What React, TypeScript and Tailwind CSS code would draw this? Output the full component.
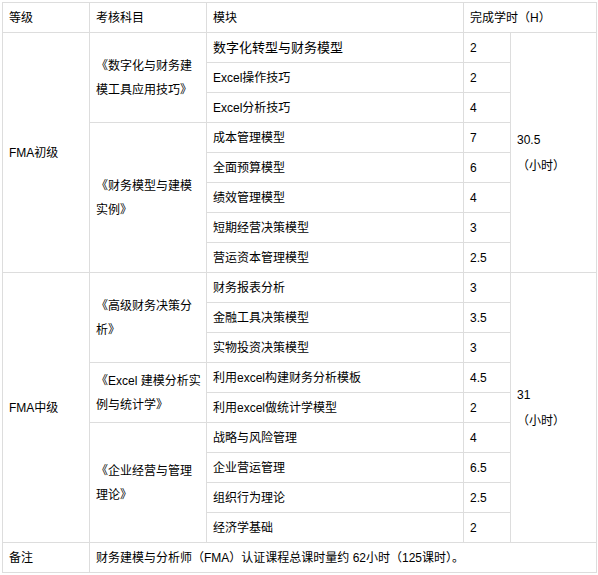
const cell = 'border border-[#dddddd] px-[6px] align-middle';

type Mod = { name: string; hours: string; big?: boolean };

const groups: {
  level: string;
  total: string;
  subjects: { lines: [string, string]; modules: Mod[] }[];
}[] = [
  {
    level: 'FMA初级',
    total: '30.5',
    subjects: [
      {
        lines: ['《数字化与财务建', '模工具应用技巧》'],
        modules: [
          { name: '数字化转型与财务模型', hours: '2', big: true },
          { name: 'Excel操作技巧', hours: '2' },
          { name: 'Excel分析技巧', hours: '4' },
        ],
      },
      {
        lines: ['《财务模型与建模', '实例》'],
        modules: [
          { name: '成本管理模型', hours: '7' },
          { name: '全面预算模型', hours: '6' },
          { name: '绩效管理模型', hours: '4' },
          { name: '短期经营决策模型', hours: '3' },
          { name: '营运资本管理模型', hours: '2.5' },
        ],
      },
    ],
  },
  {
    level: 'FMA中级',
    total: '31',
    subjects: [
      {
        lines: ['《高级财务决策分', '析》'],
        modules: [
          { name: '财务报表分析', hours: '3' },
          { name: '金融工具决策模型', hours: '3.5' },
          { name: '实物投资决策模型', hours: '3' },
        ],
      },
      {
        lines: ['《Excel 建模分析实', '例与统计学》'],
        modules: [
          { name: '利用excel构建财务分析模板', hours: '4.5' },
          { name: '利用excel做统计学模型', hours: '2' },
        ],
      },
      {
        lines: ['《企业经营与管理', '理论》'],
        modules: [
          { name: '战略与风险管理', hours: '4' },
          { name: '企业营运管理', hours: '6.5' },
          { name: '组织行为理论', hours: '2.5' },
          { name: '经济学基础', hours: '2' },
        ],
      },
    ],
  },
];

export default function App() {
  return (
    <div className="h-[575px] w-[598px] overflow-hidden bg-white pl-[2px] pt-[2px] font-['Liberation_Sans','Noto_Sans_CJK_SC',sans-serif] text-[12px] text-black">
      <table className="w-[594px] table-fixed border-collapse">
        <colgroup>
          <col className="w-[87px]" />
          <col className="w-[117px]" />
          <col className="w-[257px]" />
          <col className="w-[47px]" />
          <col className="w-[86px]" />
        </colgroup>
        <tbody>
          <tr className="h-[30px]">
            <td className={cell}>等级</td>
            <td className={cell}>考核科目</td>
            <td className={cell}>模块</td>
            <td className={cell} colSpan={2}>
              完成学时（H）
            </td>
          </tr>
          {groups.map((g) => {
            const rowCount = g.subjects.reduce((n, s) => n + s.modules.length, 0);
            let first = true;
            return g.subjects.map((s, si) =>
              s.modules.map((m, mi) => {
                const isFirst = first;
                first = false;
                return (
                  <tr key={`${g.level}-${si}-${mi}`} className="h-[30px]">
                    {isFirst ? (
                      <td className={cell} rowSpan={rowCount}>
                        {g.level}
                      </td>
                    ) : null}
                    {mi === 0 ? (
                      <td className={`${cell} whitespace-nowrap leading-[24px]`} rowSpan={s.modules.length}>
                        {s.lines[0]}
                        <br />
                        {s.lines[1]}
                      </td>
                    ) : null}
                    <td className={`${cell} whitespace-nowrap ${m.big ? 'text-[13px]' : ''}`}>{m.name}</td>
                    <td className={cell}>{m.hours}</td>
                    {isFirst ? (
                      <td className={`${cell} leading-[26px]`} rowSpan={rowCount}>
                        {g.total}
                        <br />
                        （小时）
                      </td>
                    ) : null}
                  </tr>
                );
              }),
            );
          })}
          <tr className="h-[30px]">
            <td className={cell}>备注</td>
            <td className={`${cell} whitespace-nowrap`} colSpan={4}>
              财务建模与分析师（FMA）认证课程总课时量约 62小时（125课时）。
            </td>
          </tr>
        </tbody>
      </table>
    </div>
  );
}
